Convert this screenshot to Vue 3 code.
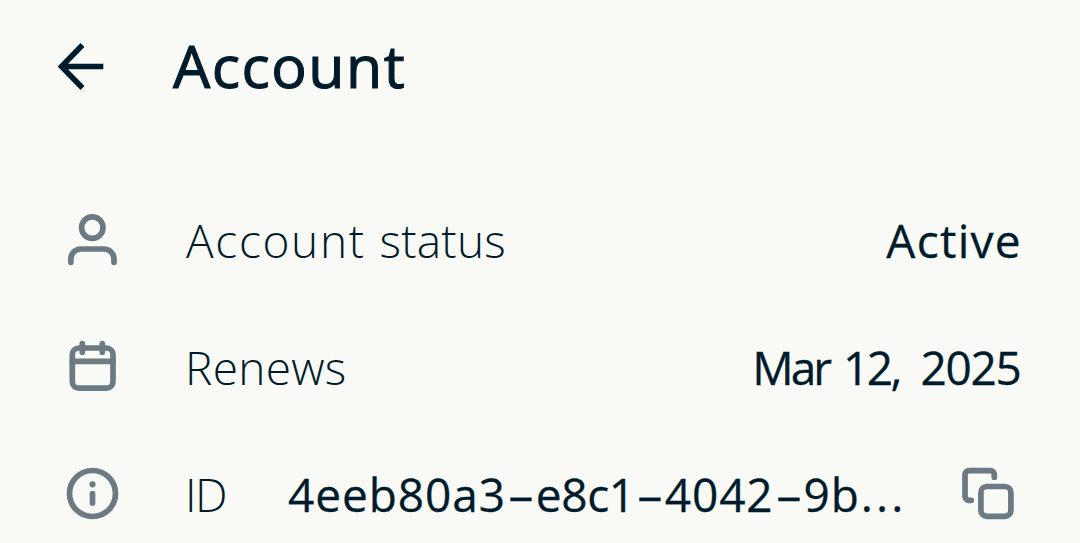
<script setup>
import { ref } from 'vue'

const account = ref({
    status: 'Active',
    renews: ['Mar ', '12, ', '2025'],
    id: ['4eeb80a3', 'e8c1', '4042', '9b']
})
</script>

<template>
    <div class="account_page">
        <div class="header">
            <svg class="back" viewBox="0 0 50 50">
                <path d="M25.500 3 L4.500 24.500 L25.500 46 M4.500 24.500 H46.300" />
            </svg>
            <div class="title">Account</div>
        </div>
        <div class="row">
            <svg class="icon" viewBox="0 0 64 65">
                <circle cx="32.300" cy="19.600" r="10.700" />
                <path d="M10.800 54.300 V51 A10 10 0 0 1 20.800 41 H44 A10 10 0 0 1 54 51 V54.300" />
            </svg>
            <div class="label"><span class="wide">Account </span><span class="narrow">status</span></div>
            <div class="value status_value">{{ account.status }}</div>
        </div>
        <div class="row">
            <svg class="icon" viewBox="0 0 64 65">
                <rect x="12.300" y="13" width="40.700" height="40.200" rx="6.500" />
                <path d="M12.300 26.300 H53 M22.300 8.500 V17.200 M42.300 8.500 V17.200" />
            </svg>
            <div class="label renews_label">Renews</div>
            <div class="value">
                <span class="month">{{ account.renews[0] }}</span>
                <span class="day">{{ account.renews[1] }}</span>
                <span class="year">{{ account.renews[2] }}</span>
            </div>
        </div>
        <div class="row">
            <svg class="icon" viewBox="0 0 64 65">
                <circle cx="32.500" cy="31.500" r="23" />
                <path d="M32.500 31.600 V41" />
                <circle class="dot" cx="32.500" cy="22.300" r="3.100" />
            </svg>
            <div class="label id_label">ID</div>
            <div class="value id_value">
                <template v-for="(part, i) in account.id" :key="i"><span v-if="i > 0" class="dash">-</span><span :class="{ tight: i === 1 }">{{ part }}</span></template><span class="ellipsis">...</span>
            </div>
            <svg class="icon copy" viewBox="0 0 64 65">
                <path d="M15.200 38.300 H13 A4 4 0 0 1 9 34.300 V12.700 A4 4 0 0 1 13 8.700 H34.300 A4 4 0 0 1 38.300 12.700 V15.200" />
                <rect x="24.900" y="24.500" width="30" height="29.800" rx="6" />
            </svg>
        </div>
    </div>
</template>

<style>
body {
    background: #f9f9f5;
    overflow: hidden;
}
</style>

<style scoped>
.account_page {
    padding: 0 60px;
    color: #001b2b;
    font-family: "Open Sans", sans-serif;
    font-size: 46px;
    font-variant-ligatures: none;
    white-space: nowrap;
}
.header, .row {
    display: flex;
    align-items: center;
}
.header {
    height: 134px;
    margin-bottom: 43px;
    margin-left: -3px;
}
.row {
    height: 127px;
}
.back {
    width: 50px;
    height: 50px;
    fill: none;
    stroke: #001b2b;
    stroke-width: 5.5;
}
.title {
    font-size: 59px;
    font-weight: 500;
    letter-spacing: 1.5px;
    margin-left: 66px;
    padding-bottom: 5px;
    -webkit-text-stroke: 1.1px #001b2b;
}
.icon {
    width: 64px;
    height: 65px;
    flex: none;
    fill: none;
    stroke: #6b7a83;
    stroke-width: 5.7;
    stroke-linecap: round;
}
.dot {
    fill: #6b7a83;
    stroke: none;
}
.label {
    font-weight: 300;
    margin-left: 62px;
    padding-bottom: 2px;
}
.wide {
    letter-spacing: 1.7px;
    white-space: pre;
}
.narrow {
    letter-spacing: .2px;
}
.renews_label {
    margin-left: 61px;
    letter-spacing: .3px;
}
.id_label {
    margin-left: 61px;
    letter-spacing: -1.5px;
}
.value {
    display: flex;
    margin-left: auto;
    padding-bottom: 2px;
    -webkit-text-stroke: .3px #001b2b;
}
.status_value {
    letter-spacing: 1.3px;
    margin-right: -2px;
}
.month, .day {
    white-space: pre;
}
.month {
    letter-spacing: -3px;
    margin-right: 5px;
}
.day {
    letter-spacing: -2.5px;
    margin-right: 11px;
}
.year {
    letter-spacing: -1.3px;
    margin-right: -.5px;
}
.id_value {
    margin-left: 62px;
    letter-spacing: .9px;
}
.tight {
    letter-spacing: -.4px;
}
.dash {
    width: 30px;
    text-align: center;
    letter-spacing: 0;
    transform: scaleX(1.85);
}
.ellipsis {
    letter-spacing: 3.1px;
    margin-left: 1px;
}
.copy {
    margin-left: auto;
}
</style>
